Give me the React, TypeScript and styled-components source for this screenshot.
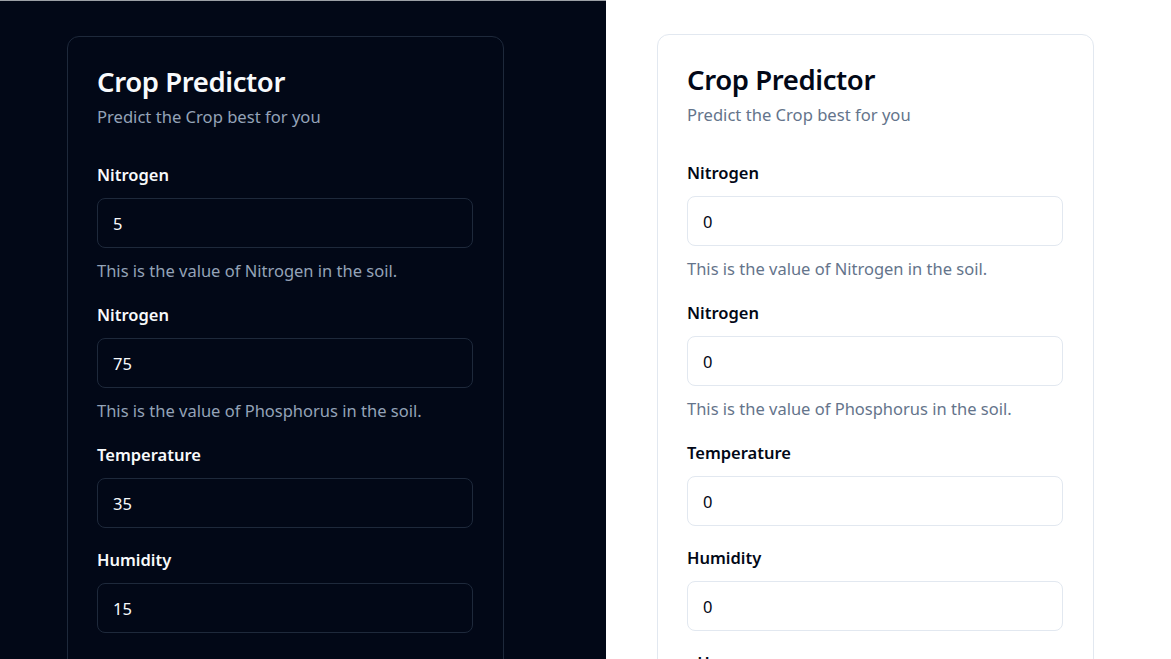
import React from "react";
import styled, { createGlobalStyle, css } from "styled-components";

const GlobalStyle = createGlobalStyle`
  html, body { margin: 0; padding: 0; height: 100%; }
  body {
    font-family: "Noto Sans", "Open Sans", Arial, sans-serif;
    overflow: hidden;
    background: #ffffff;
  }
  * { box-sizing: border-box; }
`;

type Mode = { $dark?: boolean };

const Page = styled.div`
  display: grid;
  grid-template-columns: 606px 1fr;
  width: 1171px;
  height: 659px;
  overflow: hidden;
`;

const Panel = styled.section<Mode>`
  height: 659px;
  overflow: hidden;
  ${({ $dark }) =>
    $dark
      ? css`
          background: #020817;
          border-top: 1px solid #9ca0a6;
          padding: 35px 0 0 67px;
        `
      : css`
          background: #ffffff;
          padding: 34px 0 0 51px;
        `}
`;

const Card = styled.div<Mode>`
  width: 437px;
  border-radius: 12px;
  border: 1px solid ${({ $dark }) => ($dark ? "#1e293b" : "#e2e8f0")};
  background: ${({ $dark }) => ($dark ? "#020817" : "#ffffff")};
  padding: 30px 30px 40px 29px;
  display: flex;
  flex-direction: column;
`;

const Header = styled.header`
  display: flex;
  flex-direction: column;
  margin-bottom: 34px;
`;

const Title = styled.h1<Mode>`
  margin: 0;
  font-size: 27.5px;
  line-height: 30px;
  font-weight: 600;
  letter-spacing: -0.4px;
  color: ${({ $dark }) => ($dark ? "#f8fafc" : "#020817")};
`;

const Subtitle = styled.p<Mode>`
  margin: 8px 0 0;
  font-size: 16.6px;
  line-height: 24px;
  color: ${({ $dark }) => ($dark ? "#94a3b8" : "#64748b")};
`;

const Fields = styled.div`
  display: flex;
  flex-direction: column;
  gap: 20px;
`;

const Field = styled.div`
  display: flex;
  flex-direction: column;
`;

const Label = styled.label<Mode>`
  font-size: 16.5px;
  line-height: 24px;
  font-weight: 600;
  margin-bottom: 11px;
  color: ${({ $dark }) => ($dark ? "#f8fafc" : "#020817")};
`;

const Input = styled.input<Mode>`
  height: 50px;
  width: 100%;
  border-radius: 8px;
  padding: 0 15px;
  font-family: inherit;
  font-size: 16.5px;
  outline: none;
  border: 1px solid ${({ $dark }) => ($dark ? "#1e293b" : "#e2e8f0")};
  background: ${({ $dark }) => ($dark ? "#020817" : "#ffffff")};
  color: ${({ $dark }) => ($dark ? "#f8fafc" : "#020817")};
`;

const Helper = styled.p<Mode>`
  margin: 11px 0 0;
  font-size: 16.5px;
  line-height: 24px;
  color: ${({ $dark }) => ($dark ? "#94a3b8" : "#64748b")};
`;

type FieldDef = { label: string; helper?: string };

const fields: FieldDef[] = [
  { label: "Nitrogen", helper: "This is the value of Nitrogen in the soil." },
  { label: "Nitrogen", helper: "This is the value of Phosphorus in the soil." },
  { label: "Temperature" },
  { label: "Humidity" },
  { label: "pH" },
];

const PredictorCard: React.FC<{ dark?: boolean; values: string[] }> = ({ dark, values }) => (
  <Card $dark={dark}>
    <Header>
      <Title $dark={dark}>Crop Predictor</Title>
      <Subtitle $dark={dark}>Predict the Crop best for you</Subtitle>
    </Header>
    <Fields>
      {fields.map((f, i) => (
        <Field key={i}>
          <Label $dark={dark}>{f.label}</Label>
          <Input $dark={dark} type="text" defaultValue={values[i]} readOnly />
          {f.helper && <Helper $dark={dark}>{f.helper}</Helper>}
        </Field>
      ))}
    </Fields>
  </Card>
);

export default function App() {
  return (
    <>
      <GlobalStyle />
      <Page>
        <Panel $dark>
          <PredictorCard dark values={["5", "75", "35", "15", "7"]} />
        </Panel>
        <Panel>
          <PredictorCard values={["0", "0", "0", "0", "0"]} />
        </Panel>
      </Page>
    </>
  );
}
